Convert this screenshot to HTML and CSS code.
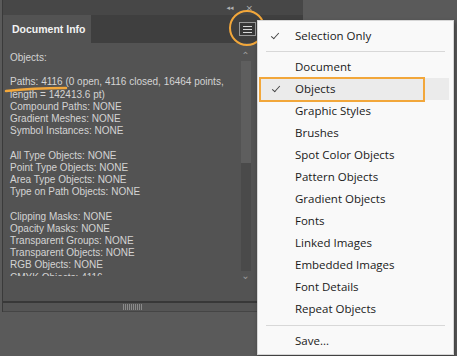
FILE: index.html
```html
<!DOCTYPE html>
<html lang="en">
<head>
	<meta charset="UTF-8">
	<meta name="viewport" content="width=device-width, initial-scale=1.0">
	<title>Document Info</title>
	<link rel="stylesheet" href="styles.css">
</head>
<body>
	<div class="workspace">
		<div class="panel">
			<div class="panel-top">
				<span class="top-btn">&#9666;&#9666;</span>
				<span class="top-btn close">&times;</span>
			</div>
			<div class="tabbar">
				<div class="tab">Document Info</div>
				<div class="menu-btn">
					<span></span><span></span><span></span>
				</div>
			</div>
			<div class="panel-body">
				<div class="info">
					<div>Objects:</div>
					<div class="gap"></div>
					<div>Paths: 4116 (0 open, 4116 closed, 16464 points,</div>
					<div>length = 142413.6 pt)</div>
					<div>Compound Paths: NONE</div>
					<div>Gradient Meshes: NONE</div>
					<div>Symbol Instances: NONE</div>
					<div class="gap"></div>
					<div>All Type Objects: NONE</div>
					<div>Point Type Objects: NONE</div>
					<div>Area Type Objects: NONE</div>
					<div>Type on Path Objects: NONE</div>
					<div class="gap"></div>
					<div>Clipping Masks: NONE</div>
					<div>Opacity Masks: NONE</div>
					<div>Transparent Groups: NONE</div>
					<div>Transparent Objects: NONE</div>
					<div>RGB Objects: NONE</div>
					<div>CMYK Objects: 4116</div>
				</div>
				<div class="scrollbar">
					<div class="arrow">&#8963;</div>
					<div class="track"><div class="thumb"></div></div>
					<div class="arrow">&#8964;</div>
				</div>
			</div>
			<div class="panel-foot">
				<div class="grip"></div>
			</div>
		</div>

		<svg class="mark-underline" width="64" height="8" viewBox="0 0 64 8">
			<path d="M2 6 C 20 4, 40 3, 62 3" fill="none" stroke="#f2a73b" stroke-width="2.5" stroke-linecap="round"/>
		</svg>
		<div class="mark-circle"></div>

		<div class="flyout">
			<div class="item checked">Selection Only</div>
			<div class="sep"></div>
			<div class="item">Document</div>
			<div class="item checked active">Objects</div>
			<div class="item">Graphic Styles</div>
			<div class="item">Brushes</div>
			<div class="item">Spot Color Objects</div>
			<div class="item">Pattern Objects</div>
			<div class="item">Gradient Objects</div>
			<div class="item">Fonts</div>
			<div class="item">Linked Images</div>
			<div class="item">Embedded Images</div>
			<div class="item">Font Details</div>
			<div class="item">Repeat Objects</div>
			<div class="sep last"></div>
			<div class="item">Save...</div>
		</div>
	</div>
</body>
</html>
```

FILE: styles.css
```css
body {
	margin: 0;
	background-color: #5a5a5a;
}

.workspace {
	position: relative;
	width: 457px;
	height: 356px;
	overflow: hidden;
	background-color: #5a5a5a;
}

.panel {
	width: 300px;
	margin-left: 2px;
	display: flex;
	flex-direction: column;
	border-left: 1px solid #3a3a3a;
}

.panel-top {
	height: 15px;
	background-color: #474747;
	display: flex;
	align-items: center;
	justify-content: flex-end;
	padding-right: 50px;
	gap: 12px;
	font-family: "DejaVu Sans", sans-serif;
	font-size: 7px;
	color: #b0b0b0;
}

.top-btn.close {
	font-size: 9px;
}

.tabbar {
	height: 28px;
	background-color: #3f3f3f;
	display: flex;
	align-items: stretch;
}

.tab {
	width: 79px;
	padding-left: 9px;
	background-color: #535353;
	color: #f2f2f2;
	font-family: "Liberation Sans", sans-serif;
	font-weight: bold;
	font-size: 10.5px;
	white-space: nowrap;
	display: flex;
	align-items: center;
}

.menu-btn {
	width: 15px;
	height: 12px;
	margin: 7px 0 0 148px;
	border: 1px solid #9a9a9a;
	background-color: #383838;
	display: flex;
	flex-direction: column;
	justify-content: center;
	align-items: center;
	gap: 2px;
}

.menu-btn span {
	display: block;
	width: 9px;
	height: 1px;
	background-color: #d8d8d8;
}

.panel-body {
	height: 258px;
	background-color: #535353;
	display: flex;
}

.info {
	width: 229px;
	height: 224px;
	padding: 9px 0 0 7px;
	overflow: hidden;
	font-family: "Liberation Sans", sans-serif;
	font-size: 10px;
	line-height: 12.2px;
	color: #d4d4d4;
	white-space: nowrap;
}

.gap {
	height: 12.2px;
}

.scrollbar {
	width: 13px;
	margin-top: 8px;
	height: 230px;
	display: flex;
	flex-direction: column;
	align-items: center;
}

.arrow {
	height: 10px;
	font-family: "DejaVu Sans", sans-serif;
	font-size: 10px;
	line-height: 10px;
	color: #9a9a9a;
}

.track {
	flex: 1;
	width: 10px;
	background-color: #4a4a4a;
}

.thumb {
	height: 102px;
	background-color: #5e5e5e;
}

.panel-foot {
	height: 8px;
	border-top: 2px solid #383838;
	border-bottom: 1px solid #454545;
	background-color: #555555;
	display: flex;
	justify-content: center;
	padding-right: 40px;
}

.grip {
	width: 20px;
	height: 6px;
	margin-top: 1px;
	background: repeating-linear-gradient(90deg, #8a8a8a 0 1px, transparent 1px 2px);
}

.mark-underline {
	position: absolute;
	left: 4px;
	top: 85px;
}

.mark-circle {
	position: absolute;
	left: 229px;
	top: 10px;
	width: 32px;
	height: 32px;
	border: 2.5px solid #f2a73b;
	border-radius: 50%;
}

.flyout {
	position: absolute;
	left: 257px;
	top: 20px;
	width: 195px;
	padding: 4px 0 2px;
	background-color: #f9f9f9;
	border: 1px solid #d6d6d6;
	box-shadow: 1px 2px 4px rgba(0, 0, 0, 0.35);
	font-family: "Open Sans", sans-serif;
	font-size: 11.5px;
	color: #1a1a1a;
}

.item {
	position: relative;
	height: 22px;
	line-height: 22px;
	padding-left: 37px;
	margin-right: 4px;
}

.item.checked::before {
	content: "";
	position: absolute;
	left: 13px;
	top: 8px;
	width: 7px;
	height: 3px;
	border-left: 1px solid #444;
	border-bottom: 1px solid #444;
	transform: rotate(-48deg);
}

.item.active {
	margin-left: 1px;
	padding-left: 36px;
	background-color: #ebebeb;
}

.item.active::after {
	content: "";
	position: absolute;
	left: 0;
	top: -1px;
	width: 162px;
	height: 21px;
	border: 2.5px solid #f2a73b;
}

.sep {
	height: 1px;
	margin: 4px 8px 4px 8px;
	background-color: #d8d8d8;
}

.sep.last {
	margin: 5px 8px 4px 8px;
}
```
